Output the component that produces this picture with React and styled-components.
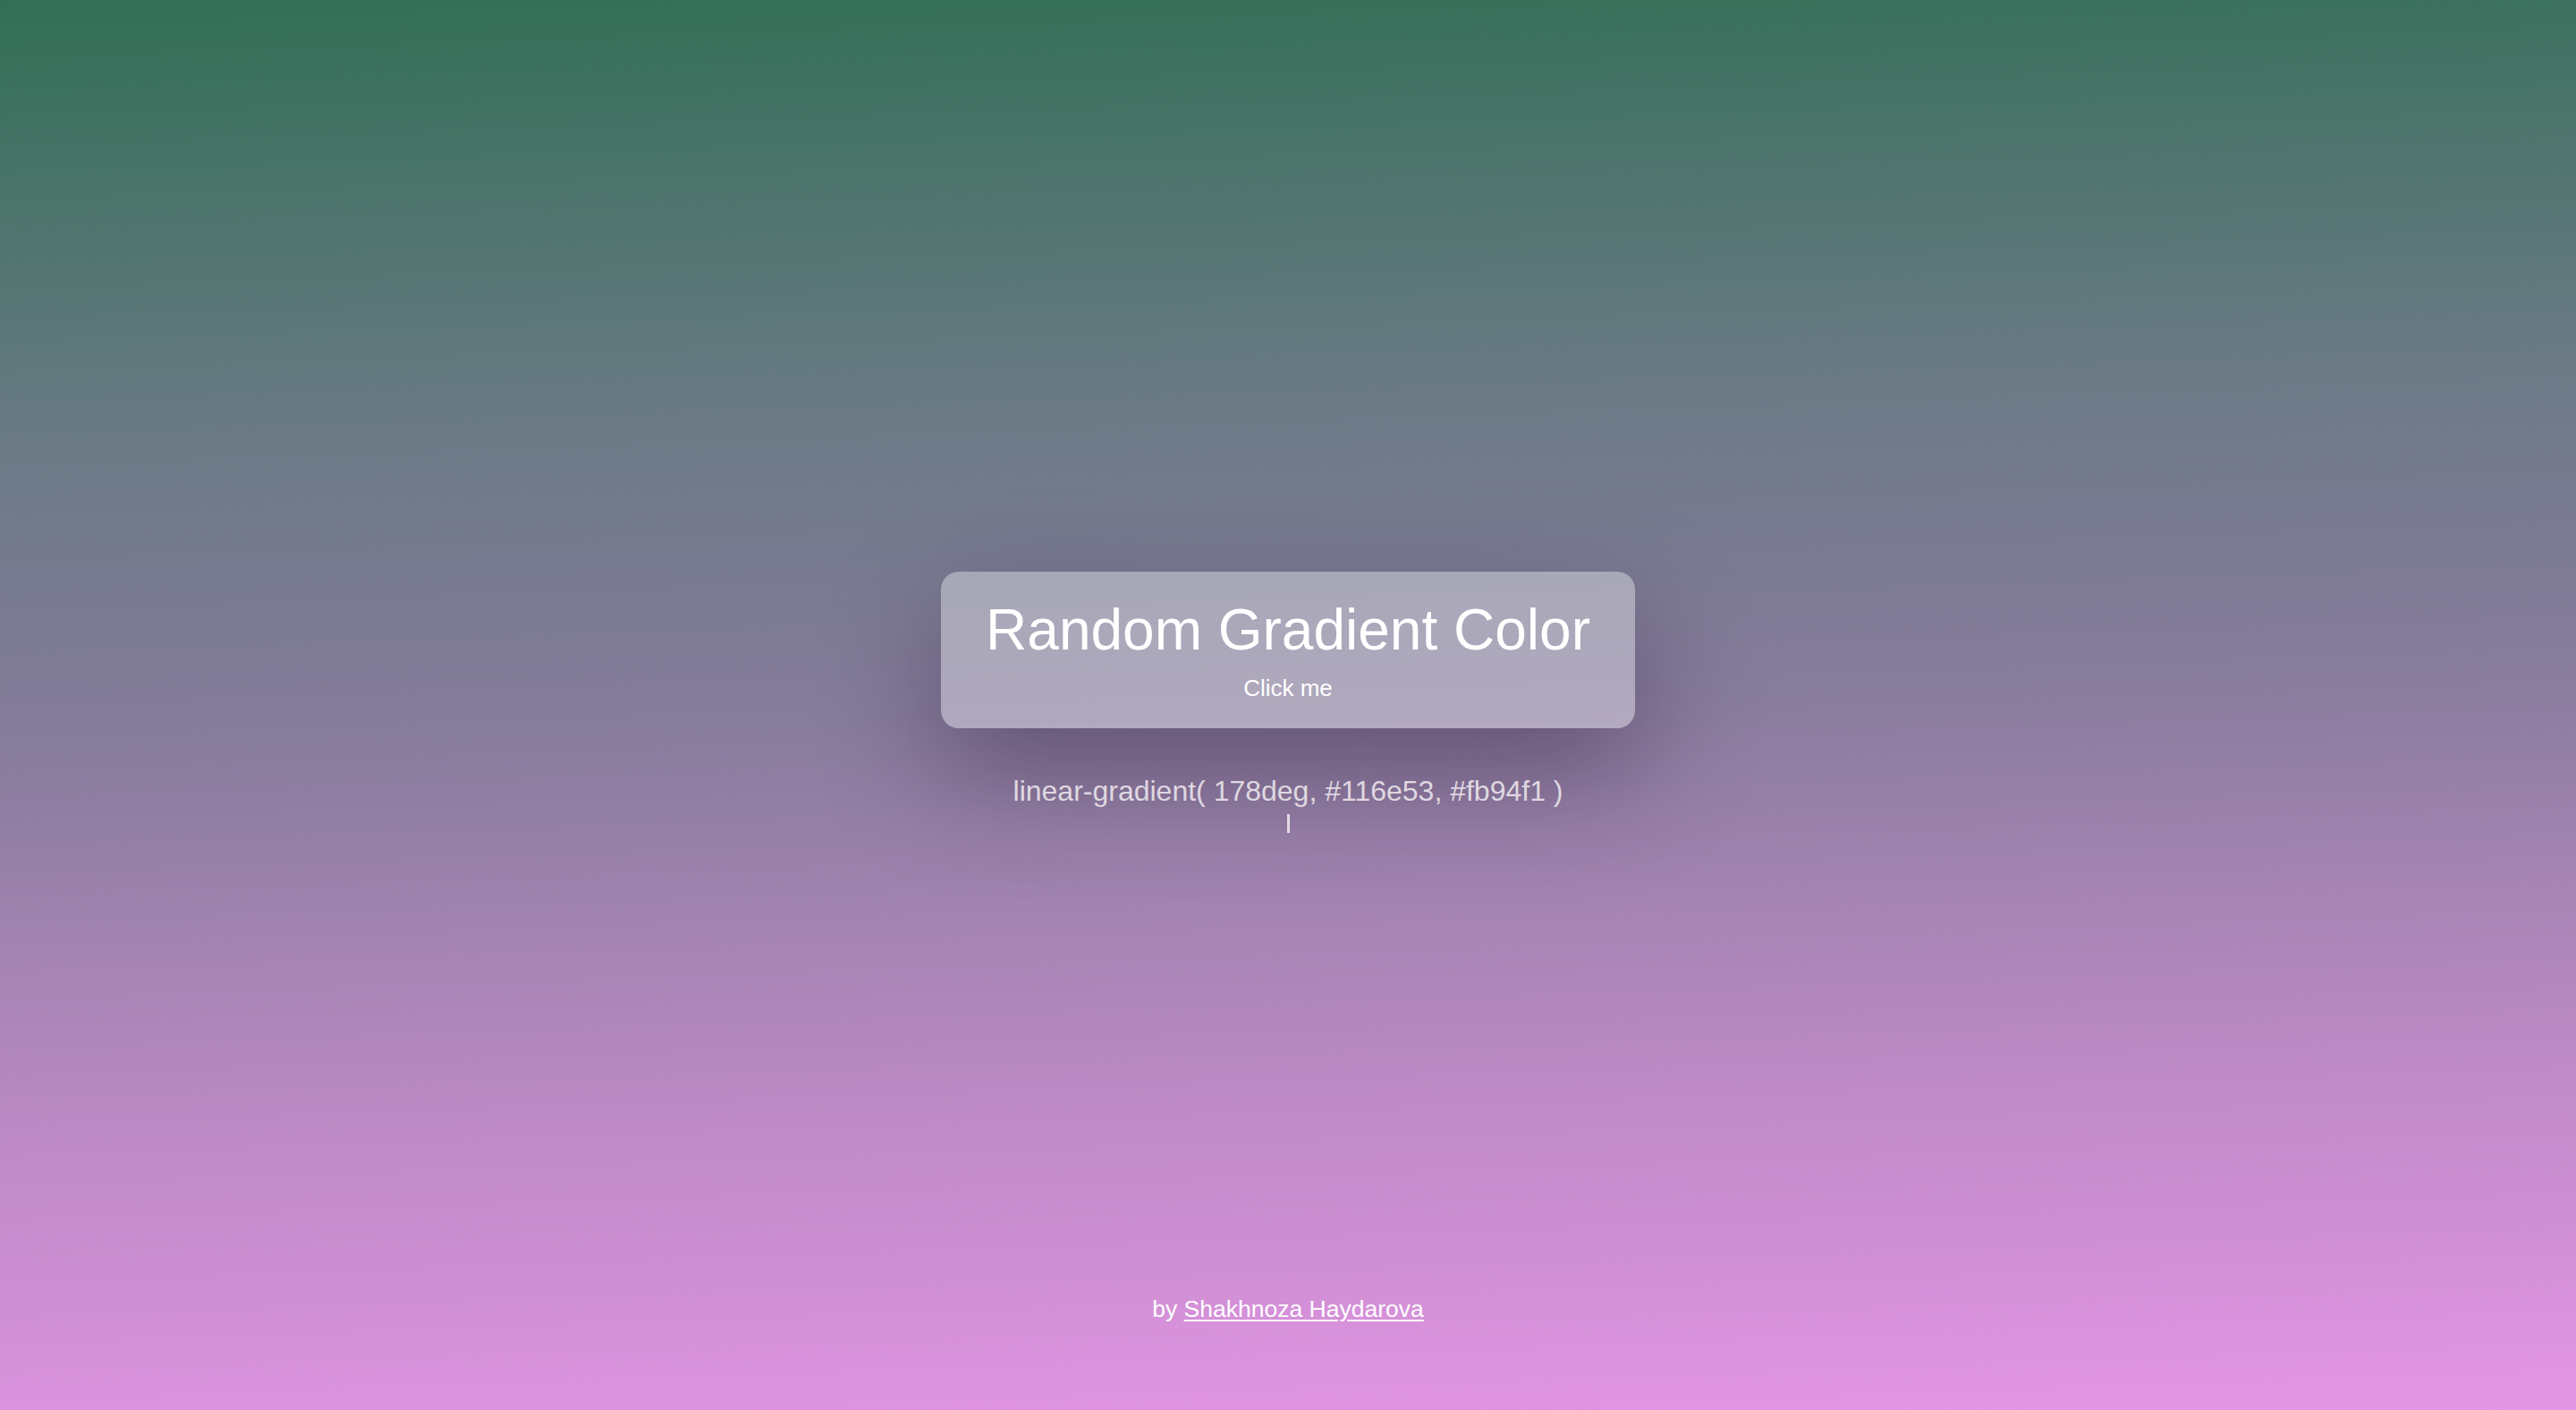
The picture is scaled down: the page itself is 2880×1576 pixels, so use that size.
import React, { useState } from 'react';
import styled, { createGlobalStyle } from 'styled-components';

const GlobalStyle = createGlobalStyle`
  html, body {
    margin: 0;
    padding: 0;
    height: 100%;
  }
  body {
    font-family: "Liberation Sans", Arial, Helvetica, sans-serif;
  }
  #root {
    height: 100%;
  }
`;

const Page = styled.div`
  min-height: 100vh;
  display: flex;
  flex-direction: column;
  align-items: center;
  background: linear-gradient(178deg, #316f55 0%, #6b7a86 30%, #877c9c 50%, #bb89c4 75%, #e495e5 100%);
  color: #fff;
`;

const Main = styled.main`
  flex: 1;
  display: flex;
  flex-direction: column;
  align-items: center;
  justify-content: center;
  padding-top: 122px;
`;

const GradientButton = styled.button`
  width: 776px;
  height: 175px;
  display: flex;
  flex-direction: column;
  align-items: center;
  justify-content: center;
  border: none;
  border-radius: 20px;
  background: rgba(255, 255, 255, 0.34);
  box-shadow: 0 50px 130px rgba(40, 20, 50, 0.4);
  color: #fff;
  font-family: inherit;
  cursor: pointer;
`;

const Title = styled.span`
  font-size: 64px;
  line-height: 1;
  padding-top: 4px;
`;

const Hint = styled.span`
  font-size: 26px;
  margin-top: 18px;
`;

const Code = styled.p`
  margin: 51px 0 0;
  font-size: 32px;
  line-height: 38px;
  color: rgba(240, 236, 240, 0.85);
  text-align: center;
`;

const Caret = styled.span`
  display: block;
  width: 3px;
  height: 21px;
  margin: 7px auto 0;
  background: rgba(240, 236, 240, 0.85);
`;

const Footer = styled.footer`
  padding-bottom: 97px;
  font-size: 26.5px;
`;

const Author = styled.a`
  color: #fff;
  text-decoration: underline;
  text-underline-offset: 3px;
`;

export default function App() {
  const [gradient] = useState('linear-gradient( 178deg, #116e53, #fb94f1 )');
  return (
    <>
      <GlobalStyle />
      <Page>
        <Main>
          <GradientButton>
            <Title>Random Gradient Color</Title>
            <Hint>Click me</Hint>
          </GradientButton>
          <Code>{gradient}</Code>
          <Caret />
        </Main>
        <Footer>
          by <Author href="#">Shakhnoza Haydarova</Author>
        </Footer>
      </Page>
    </>
  );
}
